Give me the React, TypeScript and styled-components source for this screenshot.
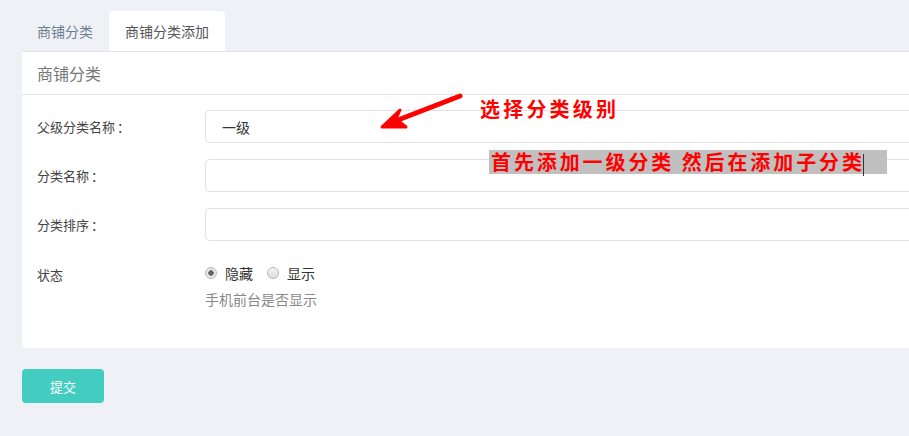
import React from "react";
import styled, { createGlobalStyle } from "styled-components";

const GlobalStyle = createGlobalStyle`
    html, body {
        margin: 0;
        padding: 0;
        background: #f0f1f6;
        overflow: hidden;
    }
    body {
        font-family: "Noto Sans CJK SC", "Noto Sans", sans-serif;
        font-size: 13px;
        color: #333;
    }
`

const Page = styled.div`
    position: relative;
    width: 909px;
    height: 436px;
    padding: 11px 0 0 22px;
    box-sizing: border-box;
`

const TabBar = styled.div`
    display: flex;
    height: 40px;
`

const Tab = styled.div<{ $active?: boolean }>`
    display: flex;
    align-items: center;
    padding: 0 16px 0 ${p => (p.$active ? "16px" : "15px")};
    font-size: 14px;
    color: ${p => (p.$active ? "#555" : "#6b7f93")};
    background: ${p => (p.$active ? "#fff" : "transparent")};
    border-radius: 4px 4px 0 0;
`

const Panel = styled.div`
    width: 920px;
    background: #fff;
    border-top: 1px solid #e3e3e3;
    border-radius: 0 0 4px 4px;
    padding-bottom: 39px;
`

const PanelHead = styled.div`
    height: 42px;
    display: flex;
    align-items: center;
    padding-left: 15px;
    font-size: 16px;
    color: #777;
    border-bottom: 1px solid #e3e3e3;
`

const Form = styled.div`
    display: flex;
    flex-direction: column;
    gap: 16px;
    padding: 15px 0 0 15px;
`

const Row = styled.div<{ $top?: boolean }>`
    display: flex;
    align-items: ${p => (p.$top ? "flex-start" : "center")};
`

const Label = styled.div<{ $pad?: boolean }>`
    width: 168px;
    flex-shrink: 0;
    color: #444;
    padding-top: ${p => (p.$pad ? "8px" : "0")};
`

const Colon = styled.span`
    margin-left: 2px;
`

const Input = styled.div`
    flex: 1;
    height: 31px;
    border: 1px solid #e2e2e2;
    border-radius: 4px;
    display: flex;
    align-items: center;
    padding-left: 16px;
    font-size: 14px;
    color: #333;
`

const RadioGroup = styled.div`
    display: flex;
    flex-direction: column;
    gap: 6px;
    padding-top: 6px;
    font-size: 14px;
`

const Radios = styled.div`
    display: flex;
    align-items: center;
    gap: 14px;
`

const RadioItem = styled.label`
    display: flex;
    align-items: center;
    gap: 8px;
    color: #333;
`

const Dot = styled.span<{ $on?: boolean }>`
    width: 12px;
    height: 12px;
    border-radius: 50%;
    border: 1px solid #b8b8b8;
    background: ${p => (p.$on ? "radial-gradient(circle, #666 0 2.5px, #e8e8e8 3px)" : "linear-gradient(#f4f4f4, #dcdcdc)")};
    box-sizing: border-box;
`

const Help = styled.div`
    color: #888;
`

const Submit = styled.button`
    margin-top: 21px;
    width: 82px;
    height: 34px;
    border: none;
    border-radius: 4px;
    background: #43cdc0;
    color: #fff;
    font-family: inherit;
    font-size: 13px;
`

const Note = styled.div`
    position: absolute;
    left: 480px;
    top: 94px;
    color: #f00;
    font-size: 20px;
    font-weight: bold;
    letter-spacing: 3.2px;
`

const Highlight = styled.div`
    position: absolute;
    left: 489px;
    top: 150px;
    width: 398px;
    height: 24px;
    background: #c0c0c0;
    color: #f00;
    font-size: 20px;
    font-weight: bold;
    line-height: 24px;
    letter-spacing: 2.9px;
    padding-left: 2px;
    box-sizing: border-box;
    white-space: nowrap;
`

const Caret = styled.span`
    display: inline-block;
    width: 1px;
    height: 22px;
    margin-left: -2px;
    background: #333;
    vertical-align: middle;
`

const Arrow = styled.svg`
    position: absolute;
    left: 376px;
    top: 90px;
`

export default function App() {
    return (
        <Page>
            <GlobalStyle />
            <TabBar>
                <Tab>商铺分类</Tab>
                <Tab $active>商铺分类添加</Tab>
            </TabBar>
            <Panel>
                <PanelHead>商铺分类</PanelHead>
                <Form>
                    <Row>
                        <Label>父级分类名称<Colon>：</Colon></Label>
                        <Input>一级</Input>
                    </Row>
                    <Row>
                        <Label>分类名称<Colon>：</Colon></Label>
                        <Input />
                    </Row>
                    <Row>
                        <Label>分类排序<Colon>：</Colon></Label>
                        <Input />
                    </Row>
                    <Row $top>
                        <Label $pad>状态</Label>
                        <RadioGroup>
                            <Radios>
                                <RadioItem><Dot $on />隐藏</RadioItem>
                                <RadioItem><Dot />显示</RadioItem>
                            </Radios>
                            <Help>手机前台是否显示</Help>
                        </RadioGroup>
                    </Row>
                </Form>
            </Panel>
            <Submit>提交</Submit>

            <Arrow width="90" height="45" viewBox="0 0 90 45">
                <path d="M84 6 L22 30" stroke="#f00" strokeWidth="5" strokeLinecap="round" />
                <path d="M6 37 L24 20 L20 29 L30 37 Z" fill="#f00" stroke="#f00" strokeWidth="3" strokeLinejoin="round" />
            </Arrow>
            <Note>选择分类级别</Note>
            <Highlight>首先添加一级分类 然后在添加子分类<Caret /></Highlight>
        </Page>
    );
}
